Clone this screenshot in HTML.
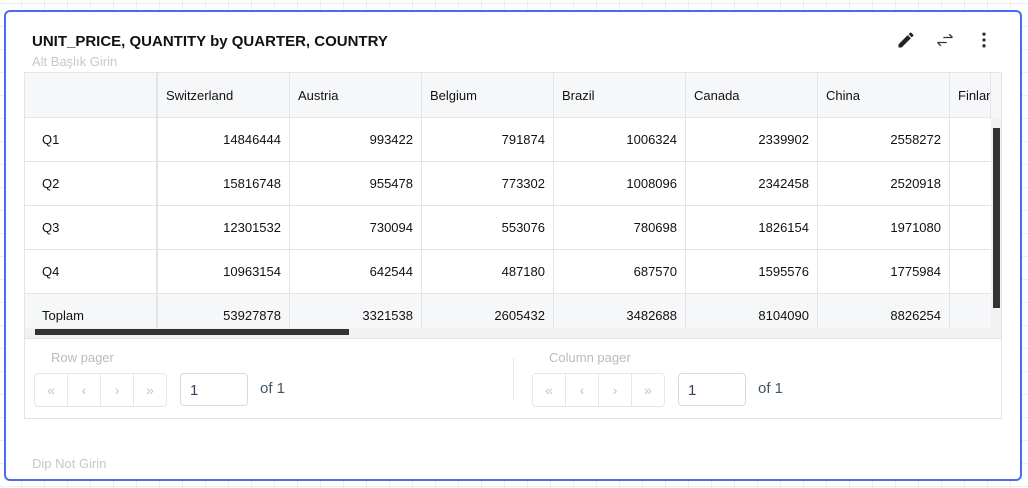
<!DOCTYPE html><html><head><style>
body{margin:0;width:1028px;height:488px;overflow:hidden;background:#fff;font-family:"Liberation Sans",sans-serif;position:relative;
background-image:linear-gradient(#eceef2 1px,transparent 1px),linear-gradient(90deg,#eceef2 1px,transparent 1px);background-size:23px 23px;background-position:-2px 3px}
.card{position:absolute;left:4px;top:10px;width:1014px;height:467px;border:2px solid #4a6cf4;border-radius:6px;background:#fff}
.t{position:absolute;left:26px;top:21px;font-size:15px;font-weight:bold;color:#111}
.s{position:absolute;left:26px;top:42px;font-size:13px;color:#c8c8c8}
.d{position:absolute;left:26px;top:444px;font-size:13px;color:#c8c8c8}
.tbl{position:absolute;left:18px;top:60px;width:976px;height:265px;overflow:hidden;border:1px solid #e2e4e8;border-bottom:none}
.c{position:absolute;box-sizing:border-box;border-right:1px solid #e2e4e8;border-bottom:1px solid #e2e4e8;font-size:13px;color:#111;padding:0 8px;display:flex;align-items:center;white-space:nowrap}
.h{background:#f6f7f9}
.r{justify-content:flex-end}
.pg{position:absolute;left:18px;top:326px;width:976px;height:79px;border:1px solid #e2e4e8;background:#fff}
.lbl{position:absolute;font-size:13px;color:#bbb}
.btns{position:absolute;width:131px;height:32px;border:1px solid #e6e7ea;border-radius:4px;display:flex}
.btns span{flex:1;border-right:1px solid #e6e7ea;color:#c0c4cc;font-size:14px;display:flex;align-items:center;justify-content:center}
.btns span:last-child{border-right:none}
.inp{position:absolute;width:68px;height:33px;border:1px solid #d6d9de;border-radius:4px;font-size:15px;color:#345;box-sizing:border-box;padding:8px 9px}
.of{position:absolute;font-size:15px;color:#456}
</style></head><body>
<div class="card">
<div class="t">UNIT_PRICE, QUANTITY by QUARTER, COUNTRY</div>
<div class="s">Alt Başlık Girin</div>
<svg style="position:absolute;left:890px;top:18px" width="20" height="20" viewBox="0 0 24 24"><path d="M3 17.25V21h3.75L17.8 9.94l-3.75-3.75L3 17.25zM20.7 7.04a1 1 0 000-1.41l-2.34-2.34a1 1 0 00-1.41 0l-1.83 1.83 3.75 3.75 1.83-1.83z" fill="#222"/></svg>
<svg style="position:absolute;left:929px;top:18px" width="20" height="20" viewBox="0 0 24 24" fill="none" stroke="#333" stroke-width="1.6"><path d="M10 9H21M17 5l4 4M14 15H3M7 19l-4-4"/></svg>
<svg style="position:absolute;left:968px;top:18px" width="20" height="20" viewBox="0 0 24 24"><circle cx="12" cy="5" r="2" fill="#333"/><circle cx="12" cy="12" r="2" fill="#333"/><circle cx="12" cy="19" r="2" fill="#333"/></svg>
<div class="tbl">
<div class="c h" style="left:0;top:0;width:133px;height:45px;border-right:2px solid #e2e4e8"></div>
<div class="c h" style="left:133px;top:0;width:132px;height:45px">Switzerland</div>
<div class="c h" style="left:265px;top:0;width:132px;height:45px">Austria</div>
<div class="c h" style="left:397px;top:0;width:132px;height:45px">Belgium</div>
<div class="c h" style="left:529px;top:0;width:132px;height:45px">Brazil</div>
<div class="c h" style="left:661px;top:0;width:132px;height:45px">Canada</div>
<div class="c h" style="left:793px;top:0;width:132px;height:45px">China</div>
<div class="c h" style="left:925px;top:0;width:132px;height:45px">Finland</div>
<div id="rows"></div>
<div style="position:absolute;left:965px;top:0;width:11px;height:45px;background:#f6f7f9;border-left:1px solid #e2e4e8;border-bottom:1px solid #e2e4e8"></div>
<div style="position:absolute;left:966px;top:45px;width:10px;height:210px;background:#f1f1f1"><div style="position:absolute;left:2px;top:10px;width:7px;height:180px;background:#333"></div></div>
<div style="position:absolute;left:0;top:255px;width:976px;height:10px;background:#f1f1f1"><div style="position:absolute;left:10px;top:1px;width:314px;height:6px;background:#333"></div></div>
</div>
<div class="pg">
<div class="lbl" style="left:26px;top:11px">Row pager</div>
<div class="btns" style="left:9px;top:34px"><span>«</span><span>‹</span><span>›</span><span>»</span></div>
<div class="inp" style="left:155px;top:34px">1</div>
<div class="of" style="left:235px;top:41px">of 1</div>
<div style="position:absolute;left:488px;top:19px;width:1px;height:42px;background:#e6e7ea"></div>
<div class="lbl" style="left:524px;top:11px">Column pager</div>
<div class="btns" style="left:507px;top:34px"><span>«</span><span>‹</span><span>›</span><span>»</span></div>
<div class="inp" style="left:653px;top:34px">1</div>
<div class="of" style="left:733px;top:41px">of 1</div>
</div>
<div class="d">Dip Not Girin</div>
</div>
<script>
var d=[["Q1",14846444,993422,791874,1006324,2339902,2558272],["Q2",15816748,955478,773302,1008096,2342458,2520918],["Q3",12301532,730094,553076,780698,1826154,1971080],["Q4",10963154,642544,487180,687570,1595576,1775984],["Toplam",53927878,3321538,2605432,3482688,8104090,8826254]];
var h="";d.forEach(function(r,i){var y=45+i*44,bg=i==4?"h":"";
h+='<div class="c '+bg+'" style="left:0;top:'+y+'px;width:133px;height:44px;padding-left:17px;border-right:2px solid #e2e4e8">'+r[0]+'</div>';
for(var j=1;j<8;j++)h+='<div class="c r '+bg+'" style="left:'+(133+(j-1)*132)+'px;top:'+y+'px;width:132px;height:44px">'+(r[j]||"")+'</div>';});
document.getElementById("rows").innerHTML=h;
</script>
</body></html>
